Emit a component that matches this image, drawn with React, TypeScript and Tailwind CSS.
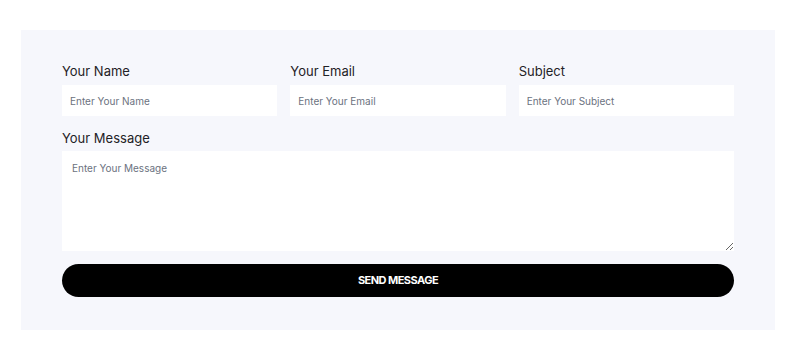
import React from "react";

const fields = [
  { label: "Your Name", placeholder: "Enter Your Name", type: "text" },
  { label: "Your Email", placeholder: "Enter Your Email", type: "email" },
  { label: "Subject", placeholder: "Enter Your Subject", type: "text" },
];

const App: React.FC = () => {
  return (
    <div
      className="min-h-[356px] bg-white pt-[30px] pl-[21px]"
      style={{ fontFamily: "Inter, 'Liberation Sans', sans-serif" }}
    >
      <form
        className="w-[754px] bg-[#f6f7fc] px-[41px] pt-[32px] pb-[33px]"
        onSubmit={(e) => e.preventDefault()}
      >
        <div className="grid grid-cols-3 gap-x-[13px]">
          {fields.map((f) => (
            <div key={f.label} className="flex flex-col">
              <label className="text-[13px] leading-[18px] text-[#1f2226] mb-[5px]">
                {f.label}
              </label>
              <input
                type={f.type}
                placeholder={f.placeholder}
                className="h-[31px] bg-white px-[8px] text-[10px] text-[#374151] placeholder:text-[#6b7280] outline-none"
              />
            </div>
          ))}
        </div>

        <div className="mt-[13px] flex flex-col">
          <label className="text-[13px] leading-[18px] text-[#1f2226] mb-[4px]">
            Your Message
          </label>
          <textarea
            placeholder="Enter Your Message"
            className="h-[100px] bg-white px-[10px] pt-[10px] pb-[11px] text-[10px] text-[#374151] placeholder:text-[#6b7280] outline-none"
          />
        </div>

        <button
          type="submit"
          className="mt-[13px] h-[33px] w-full rounded-full bg-black text-[11px] font-bold uppercase tracking-[-0.05em] text-white"
        >
          Send Message
        </button>
      </form>
    </div>
  );
};

export default App;
